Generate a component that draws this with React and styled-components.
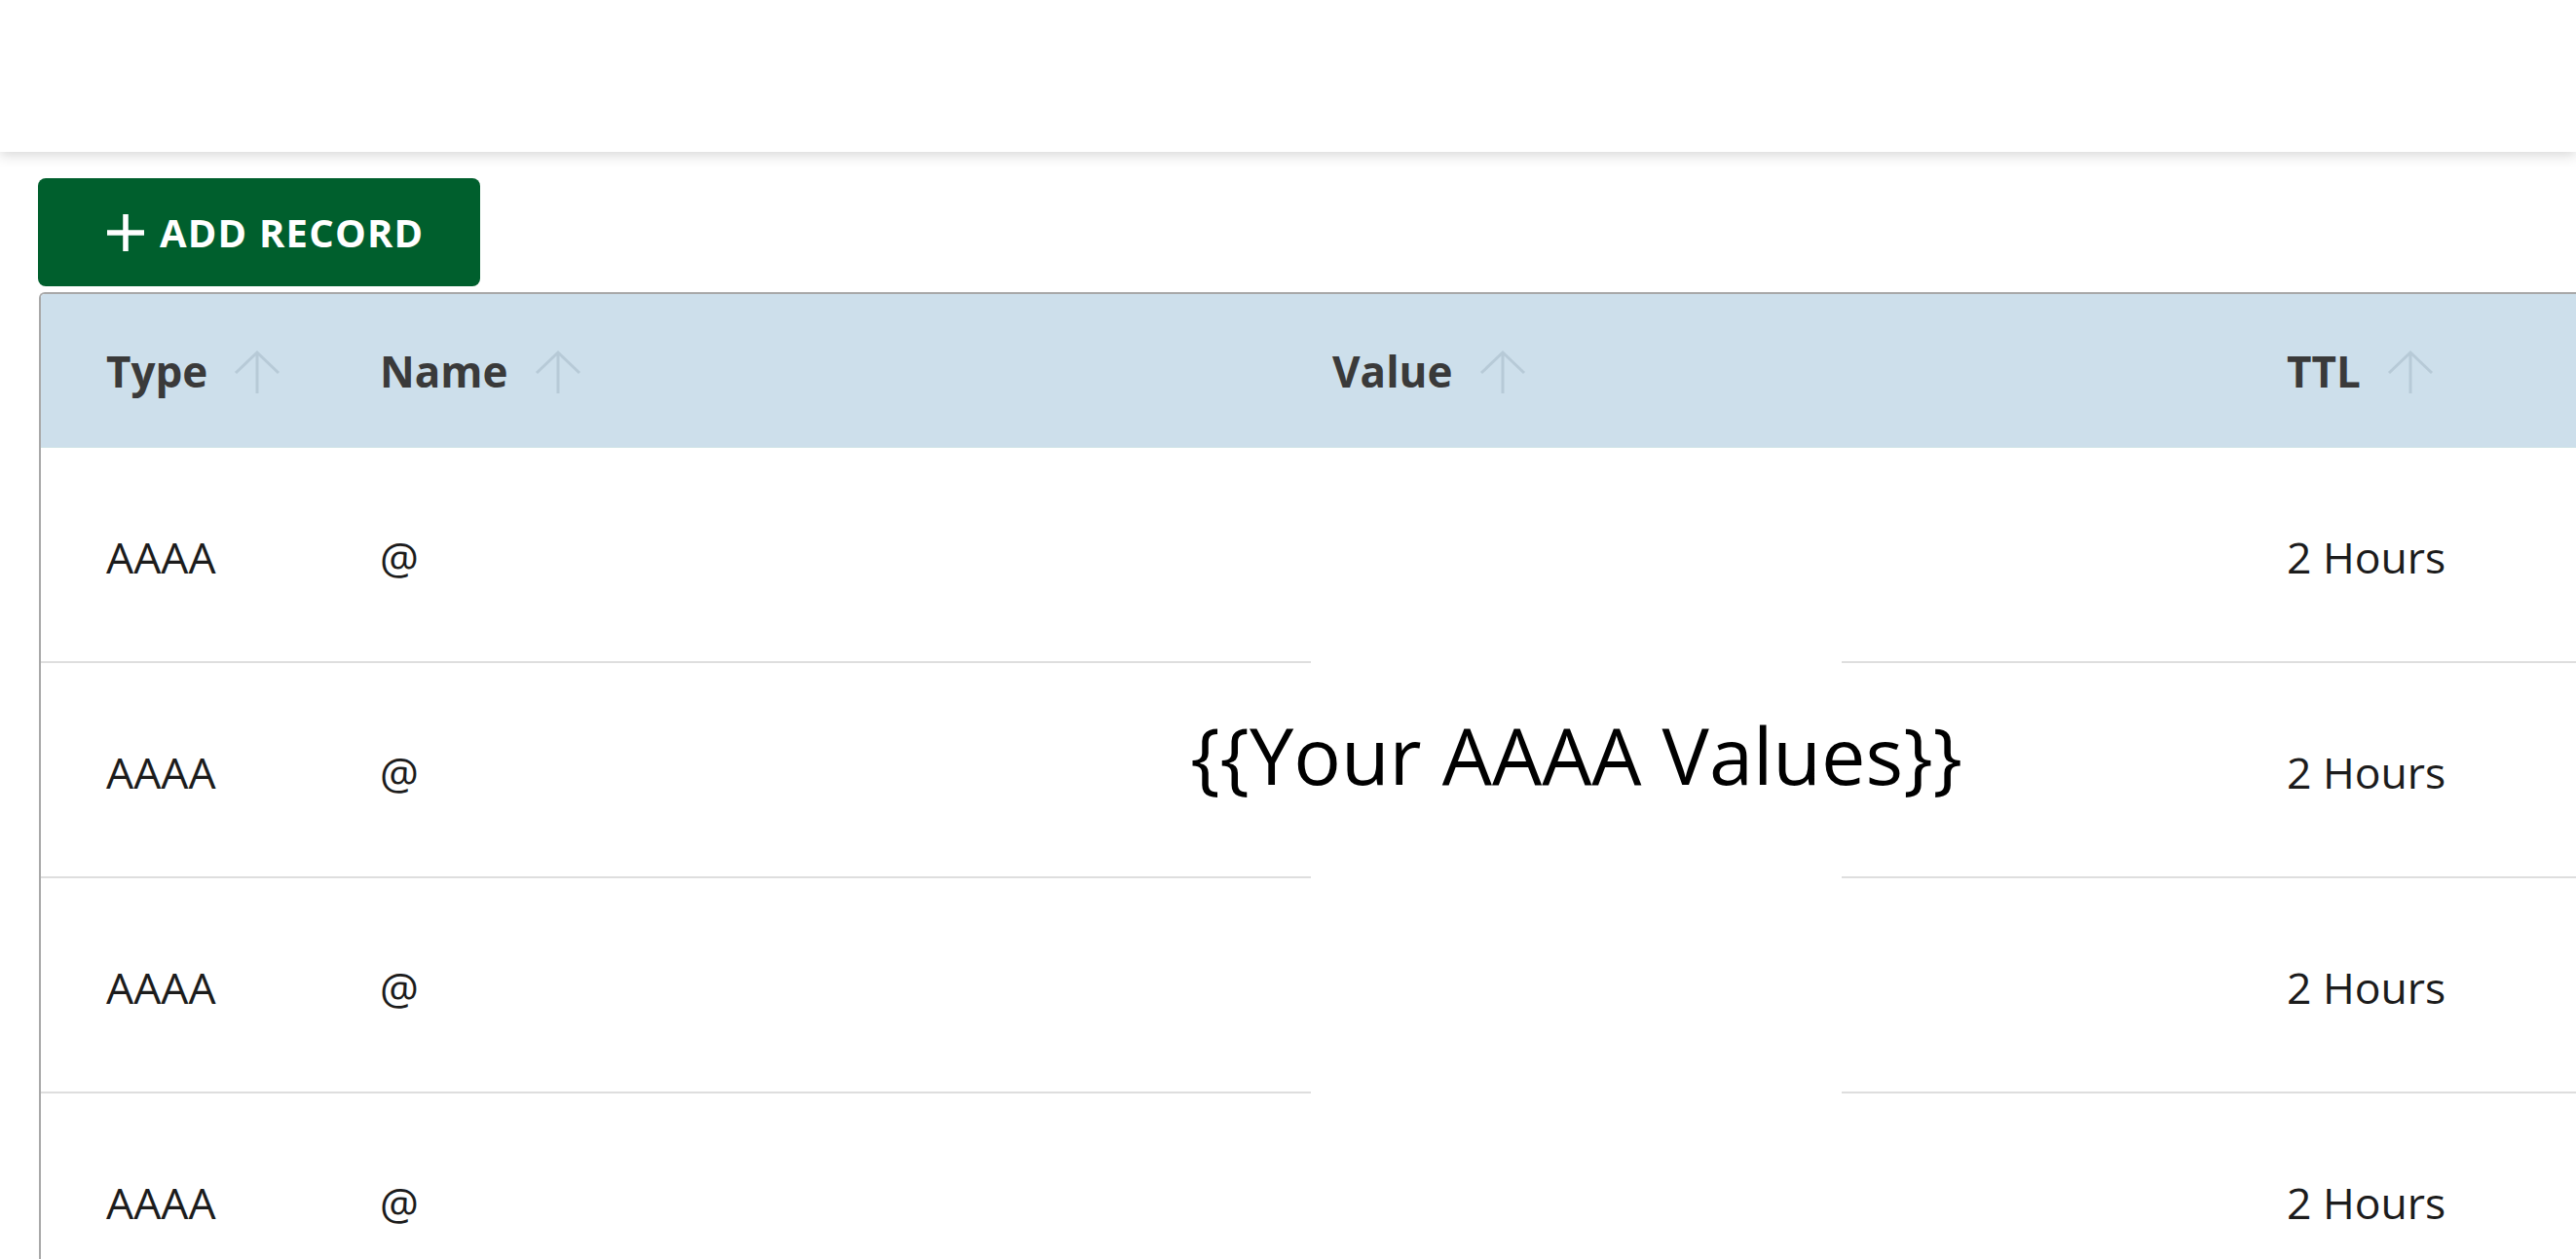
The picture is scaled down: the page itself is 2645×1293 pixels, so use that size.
import React from "react";
import styled, { createGlobalStyle } from "styled-components";

const colors = {
  green: "#005f2d",
  headerBg: "#cddfeb",
  arrow: "#b7cad7",
  border: "#a8a8a8",
  rowLine: "#dedede",
  text: "#1c1c1c",
  headText: "#3a3a3a",
};

const columns = ["Type", "Name", "Value", "TTL"];

const records = [
  { type: "AAAA", name: "@", ttl: "2 Hours" },
  { type: "AAAA", name: "@", ttl: "2 Hours" },
  { type: "AAAA", name: "@", ttl: "2 Hours" },
  { type: "AAAA", name: "@", ttl: "2 Hours" },
];

const GlobalStyle = createGlobalStyle`
  html, body {
    margin: 0;
    padding: 0;
    overflow: hidden;
    background: #ffffff;
    font-family: "Open Sans", "Noto Sans", sans-serif;
  }
`;

const SortArrow = () => (
  <ArrowIcon viewBox="0 0 50 46" aria-hidden="true">
    <path d="M3 24 L25 3 L47 24 M25 3 L25 45" />
  </ArrowIcon>
);

const PlusIcon = () => (
  <PlusSvg viewBox="0 0 40 40" aria-hidden="true">
    <path d="M20 1 L20 39 M1 20 L39 20" />
  </PlusSvg>
);

const App = () => {
  return (
    <Page>
      <GlobalStyle />
      <TopBar />
      <Content>
        <AddButton>
          <PlusIcon />
          ADD RECORD
        </AddButton>
        <Table>
          <HeadRow>
            {columns.map((col) => (
              <HeadCell key={col}>
                {col}
                <SortArrow />
              </HeadCell>
            ))}
          </HeadRow>
          <Body>
            {records.map((rec, i) => (
              <Row key={i}>
                <Cell>{rec.type}</Cell>
                <Cell>{rec.name}</Cell>
                <Cell />
                <Cell>{rec.ttl}</Cell>
              </Row>
            ))}
            <ValueNote>
              <NoteText>{"{{Your AAAA Values}}"}</NoteText>
            </ValueNote>
          </Body>
        </Table>
      </Content>
    </Page>
  );
};

const Page = styled.div`
  width: 2645px;
  height: 1293px;
  overflow: hidden;
  background: #ffffff;
`;

const TopBar = styled.header`
  position: relative;
  z-index: 2;
  height: 156px;
  background: #ffffff;
  box-shadow: 0 4px 12px rgba(0, 0, 0, 0.15);
`;

const Content = styled.main`
  padding: 27px 0 0 39px;
`;

const AddButton = styled.button`
  display: flex;
  align-items: center;
  gap: 15px;
  width: 454px;
  height: 111px;
  padding: 0 0 0 70px;
  border: none;
  border-radius: 8px;
  background: ${colors.green};
  color: #ffffff;
  font-family: "Open Sans", sans-serif;
  font-weight: 700;
  font-size: 40px;
  letter-spacing: 1.2px;
  cursor: pointer;
`;

const PlusSvg = styled.svg`
  width: 40px;
  height: 40px;
  flex-shrink: 0;

  path {
    stroke: #ffffff;
    stroke-width: 5.5;
    fill: none;
  }
`;

const Table = styled.div`
  margin: 6px 0 0 1px;
  width: 2900px;
  border-top: 2px solid ${colors.border};
  border-left: 2px solid ${colors.border};
  border-top-left-radius: 6px;
  overflow: hidden;
`;

const gridColumns = "281px 978px 980px 1fr";

const HeadRow = styled.div`
  display: grid;
  grid-template-columns: ${gridColumns};
  height: 158px;
  background: ${colors.headerBg};
  border-bottom: 1px solid #d2e5e8;
  box-sizing: border-box;
`;

const HeadCell = styled.div`
  display: flex;
  align-items: center;
  padding-left: 67px;
  font-size: 44px;
  font-weight: 700;
  color: ${colors.headText};
`;

const ArrowIcon = styled.svg`
  width: 50px;
  height: 46px;
  margin: 2px 0 0 26px;

  path {
    stroke: ${colors.arrow};
    stroke-width: 3;
    fill: none;
  }
`;

const Body = styled.div`
  position: relative;
`;

const Row = styled.div`
  display: grid;
  grid-template-columns: ${gridColumns};
  height: 221px;
  border-bottom: 2px solid ${colors.rowLine};
  box-sizing: border-box;
`;

const Cell = styled.div`
  display: flex;
  align-items: center;
  padding: 3px 0 0 67px;
  font-size: 44.5px;
  color: ${colors.text};
`;

const ValueNote = styled.div`
  position: absolute;
  left: 1304px;
  top: 180px;
  width: 545px;
  height: 520px;
  display: flex;
  justify-content: center;
  padding-top: 94px;
  box-sizing: border-box;
  background: #ffffff;
`;

const NoteText = styled.div`
  font-family: "Open Sans", sans-serif;
  font-size: 81px;
  line-height: 1;
  white-space: nowrap;
  color: #000000;
`;

export default App;
